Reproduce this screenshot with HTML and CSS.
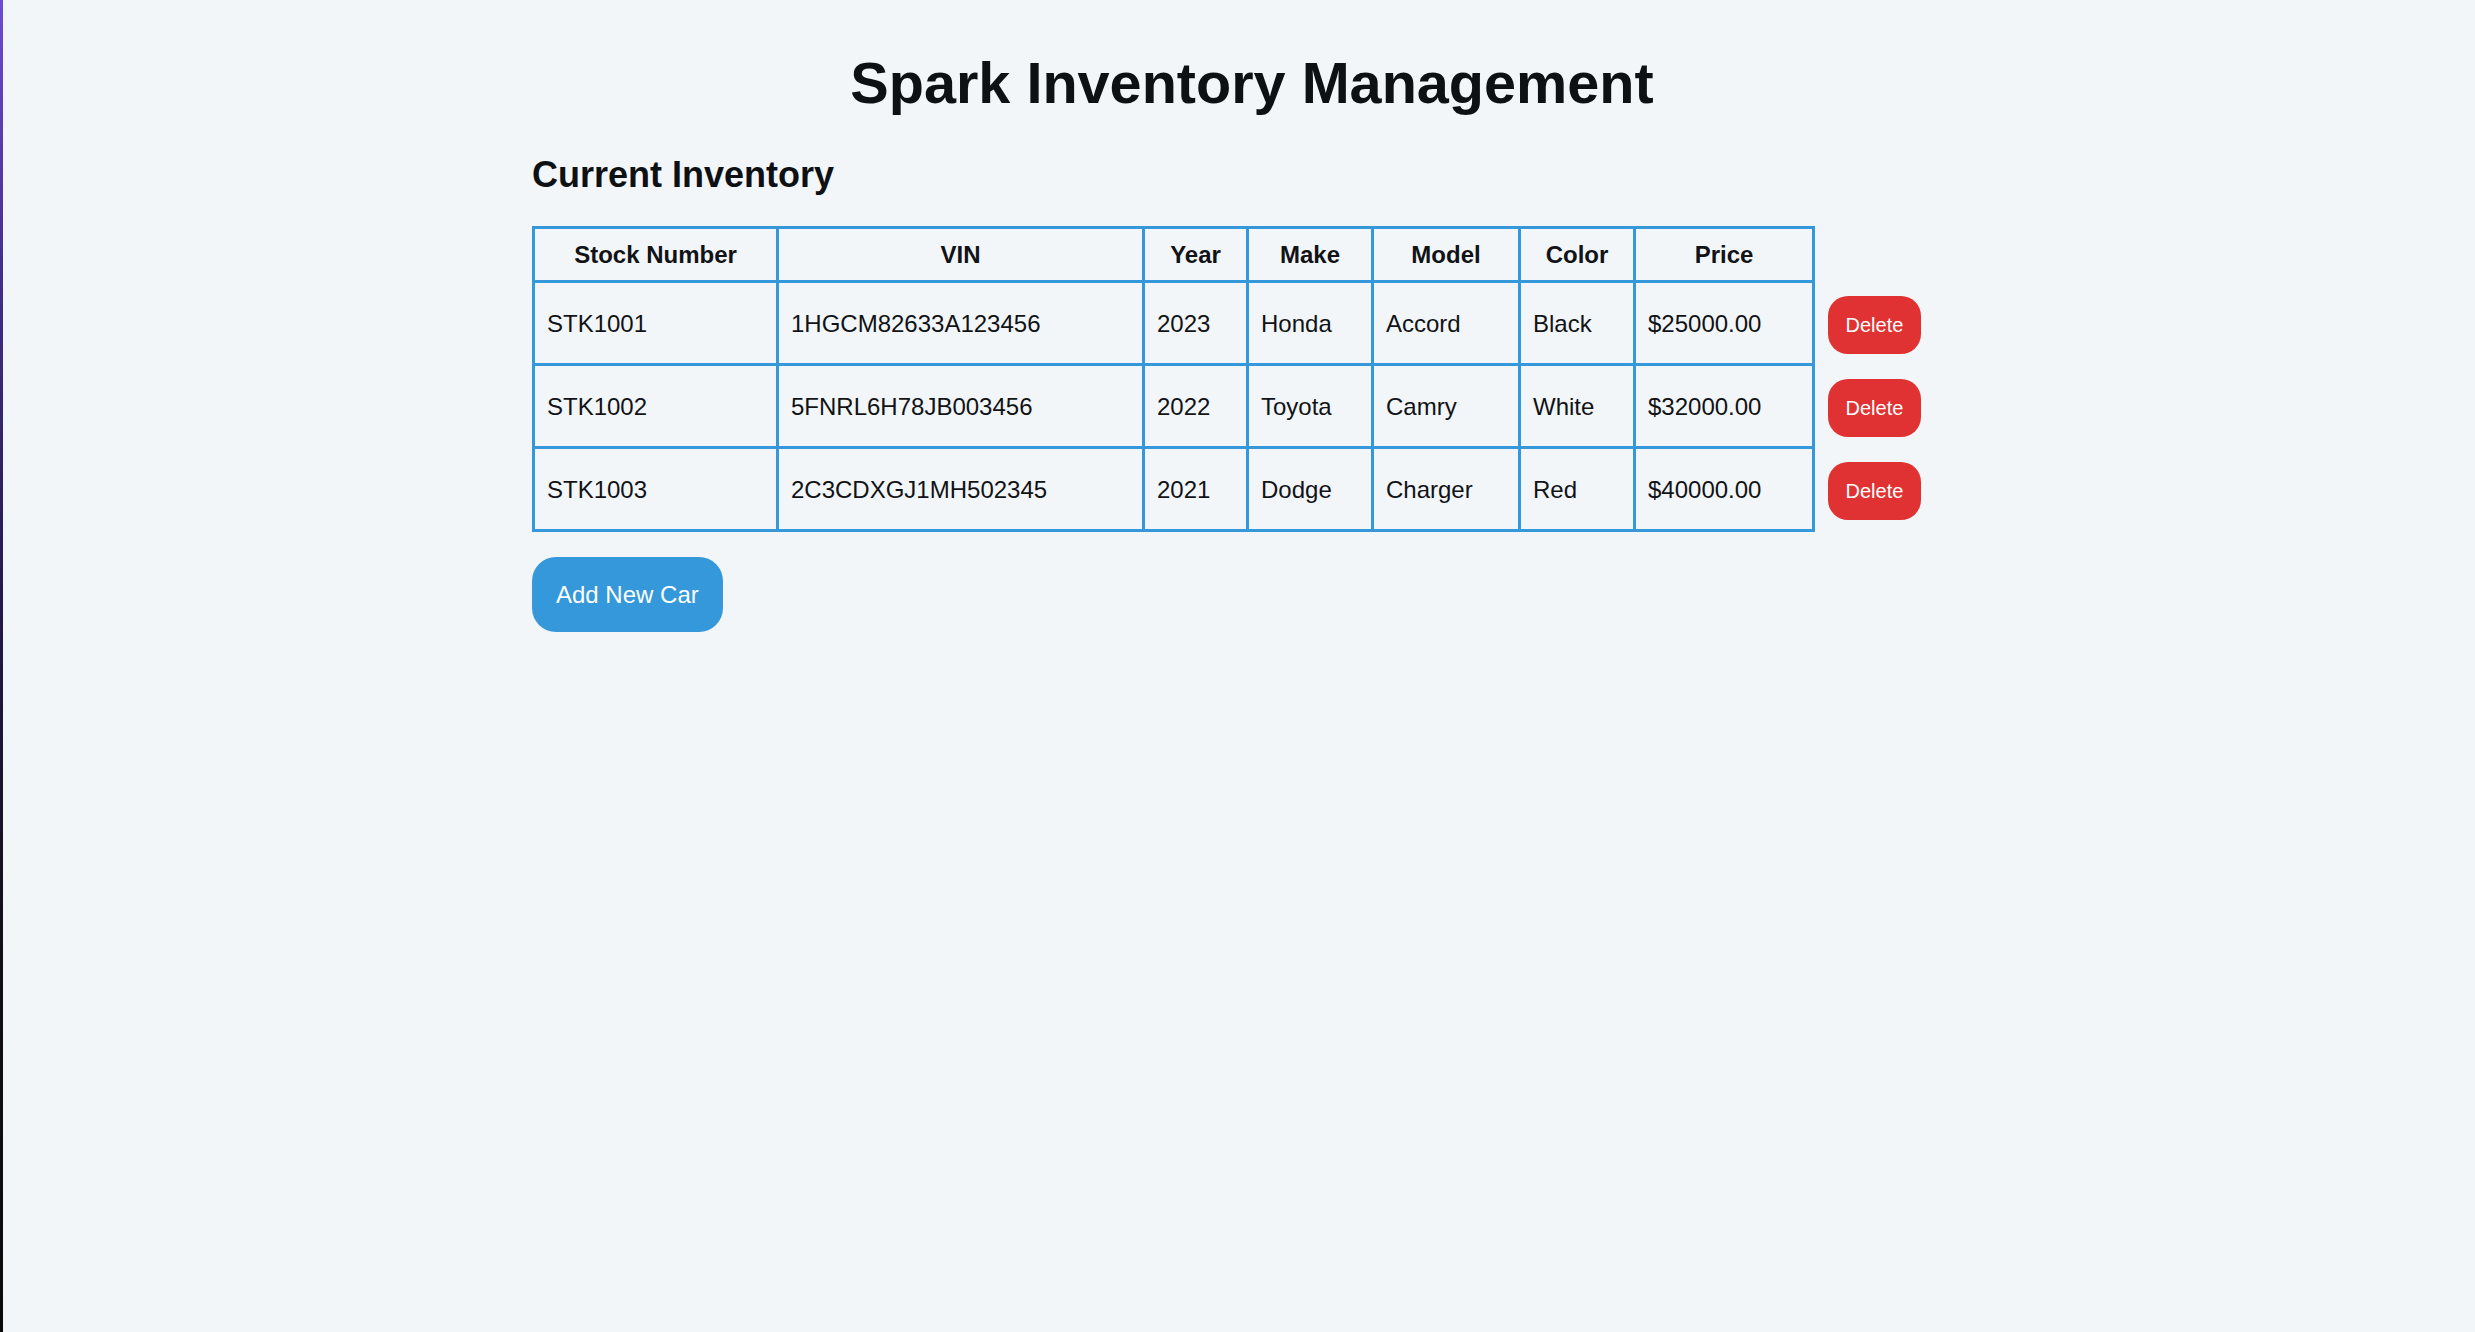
FILE: index.html
```html
<!DOCTYPE html>
<html lang="en">
<head>
<meta charset="utf-8">
<title>Spark Inventory Management</title>
<link rel="stylesheet" href="styles.css">
</head>
<body>
<main class="app">
  <h1 class="title">Spark Inventory Management</h1>
  <h2 class="section-title">Current Inventory</h2>
  <table class="inventory">
    <thead>
      <tr>
        <th class="col-stock">Stock Number</th>
        <th class="col-vin">VIN</th>
        <th class="col-year">Year</th>
        <th class="col-make">Make</th>
        <th class="col-model">Model</th>
        <th class="col-color">Color</th>
        <th class="col-price">Price</th>
        <th class="col-action"></th>
      </tr>
    </thead>
    <tbody>
      <tr>
        <td>STK1001</td>
        <td>1HGCM82633A123456</td>
        <td>2023</td>
        <td>Honda</td>
        <td>Accord</td>
        <td>Black</td>
        <td>$25000.00</td>
        <td class="cell-action"><button class="btn-delete">Delete</button></td>
      </tr>
      <tr>
        <td>STK1002</td>
        <td>5FNRL6H78JB003456</td>
        <td>2022</td>
        <td>Toyota</td>
        <td>Camry</td>
        <td>White</td>
        <td>$32000.00</td>
        <td class="cell-action"><button class="btn-delete">Delete</button></td>
      </tr>
      <tr>
        <td>STK1003</td>
        <td>2C3CDXGJ1MH502345</td>
        <td>2021</td>
        <td>Dodge</td>
        <td>Charger</td>
        <td>Red</td>
        <td>$40000.00</td>
        <td class="cell-action"><button class="btn-delete">Delete</button></td>
      </tr>
    </tbody>
  </table>
  <button class="btn-add">Add New Car</button>
</main>
</body>
</html>
```

FILE: styles.css
```css
html {
  background:
    linear-gradient(to bottom, #6d4bd2 0%, #43308a 20%, #24194a 45%, #121018 70%, #0a0a0a 100%) left top / 3px 100% no-repeat fixed,
    #f3f6f9;
}

body {
  margin: 0;
  padding: 0 0 0 29px;
  font-family: "Liberation Sans", Arial, sans-serif;
  color: #111316;
}

.app {
  width: 1440px;
  margin: 0 auto;
}

.title {
  margin: 50px 0 0;
  font-size: 57.6px;
  font-weight: 700;
  line-height: normal;
  text-align: center;
  color: #0e1114;
}

.section-title {
  margin: 38px 0 0;
  font-size: 36px;
  font-weight: 700;
  line-height: normal;
  color: #0e1114;
}

.inventory {
  margin-top: 30px;
  width: 1400px;
  table-layout: fixed;
  border-collapse: separate;
  border-spacing: 0;
}

.inventory th,
.inventory td {
  box-sizing: border-box;
  font-size: 24px;
  line-height: 27px;
  border-right: 3px solid #3498db;
  border-bottom: 3px solid #3498db;
  color: #111316;
}

.inventory th {
  height: 57px;
  padding: 0 12px;
  font-weight: 700;
  text-align: center;
  border-top: 3px solid #3498db;
}

.inventory td {
  height: 83px;
  padding: 0 12px;
  text-align: left;
  vertical-align: middle;
}

.inventory th:first-child,
.inventory td:first-child {
  border-left: 3px solid #3498db;
}

.col-stock { width: 247px; }
.col-vin { width: 366px; }
.col-year { width: 104px; }
.col-make { width: 125px; }
.col-model { width: 147px; }
.col-color { width: 115px; }
.col-price { width: 179px; }
.col-action { width: 117px; }

.inventory th.col-action,
.inventory td.cell-action {
  border: 0;
}

.inventory td.cell-action {
  padding: 0 12px 0 13px;
}

.btn-delete {
  display: block;
  box-sizing: border-box;
  height: 58px;
  padding: 0 17.5px;
  border: 0;
  border-radius: 20px;
  background: #e03232;
  color: #ffffff;
  font-family: "Liberation Sans", Arial, sans-serif;
  font-size: 20px;
  line-height: 24px;
  cursor: pointer;
}

.btn-add {
  display: block;
  margin-top: 25px;
  padding: 24px;
  border: 0;
  border-radius: 24px;
  background: #3498db;
  color: #ffffff;
  font-family: "Liberation Sans", Arial, sans-serif;
  font-size: 24px;
  line-height: 27px;
  cursor: pointer;
}
```
